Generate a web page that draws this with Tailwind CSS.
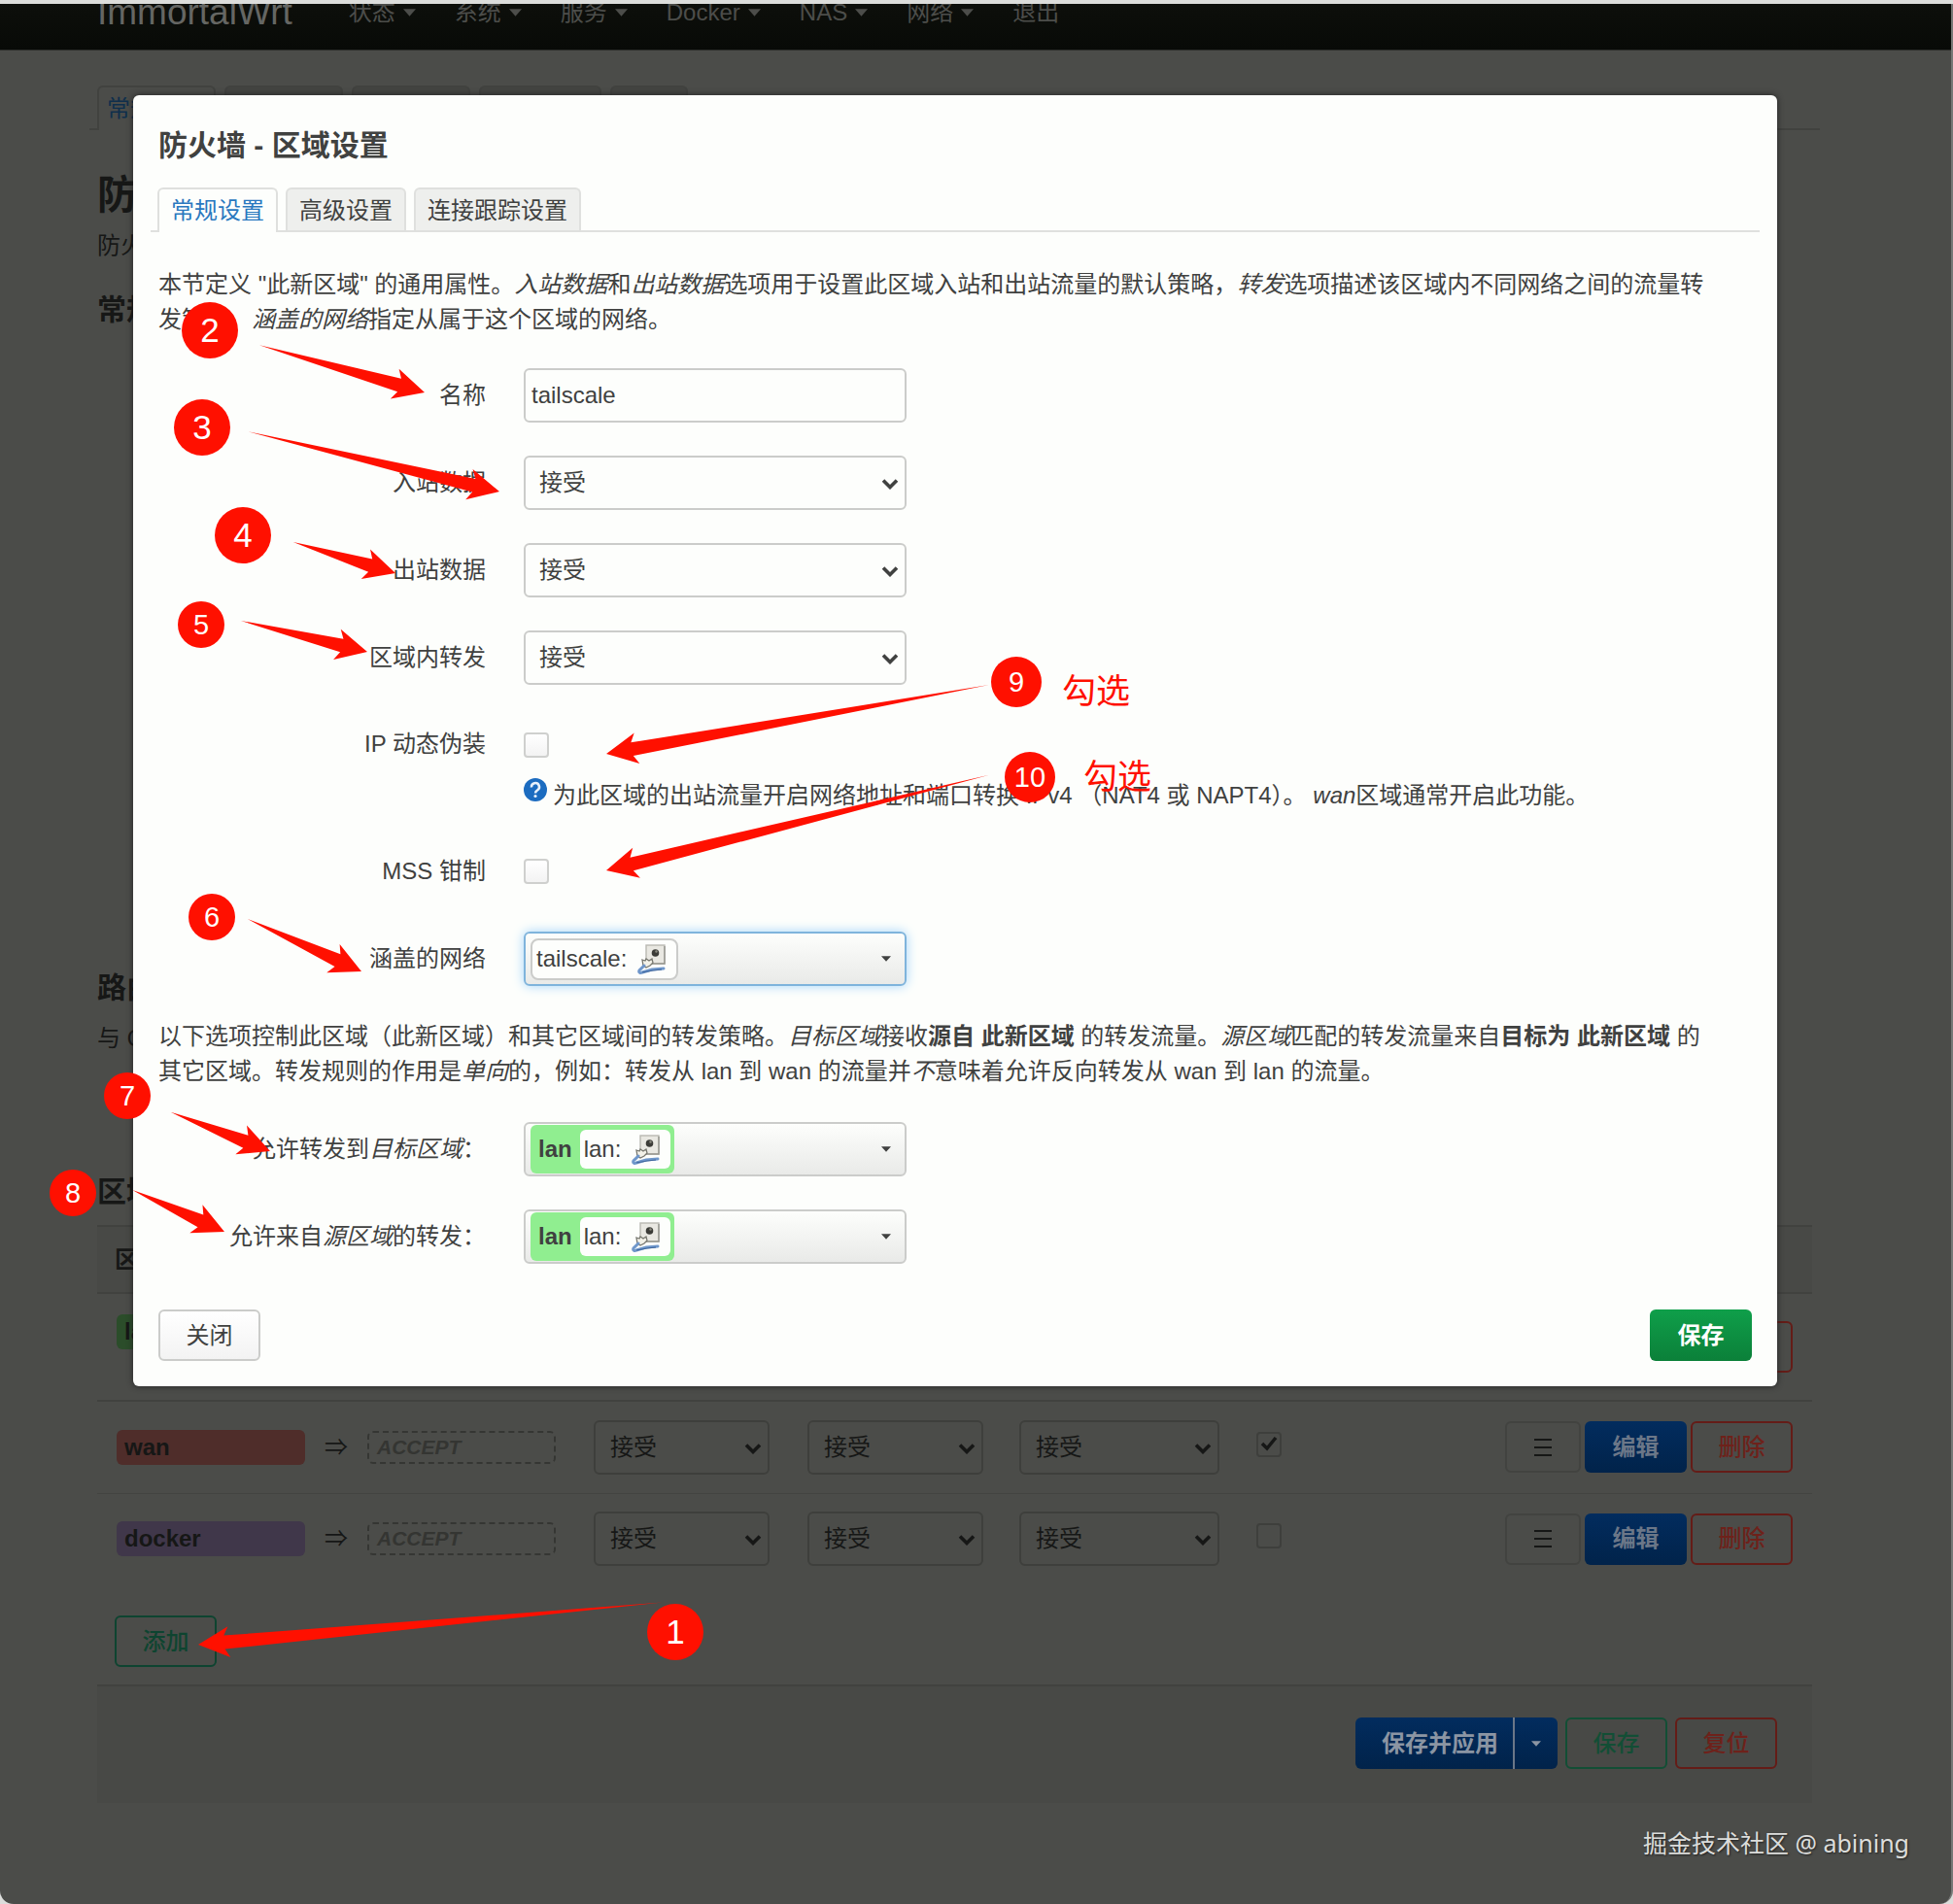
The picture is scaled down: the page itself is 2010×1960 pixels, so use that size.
<!DOCTYPE html>
<html lang="zh-CN">
  <head>
    <meta charset="UTF-8" />
    <meta name="viewport" content="width=device-width, initial-scale=1.0" />
    <title>ImmortalWrt - 防火墙</title>
    <script src="https://cdn.jsdelivr.net/npm/@tailwindcss/browser@4"></script>
  </head>
  <body class="bg-[#dcdddb] font-['Liberation_Sans','Noto_Sans_CJK_SC',sans-serif] text-[24px] leading-9 text-[#404140]">
    <!-- shared symbols -->
    <svg class="hidden">
      <symbol id="chevron" viewBox="0 0 18 12">
        <path d="M2 2.5 9 9.5 16 2.5" fill="none" stroke="currentColor" stroke-width="3.6" />
      </symbol>
      <symbol id="caret" viewBox="0 0 14 8"><path d="M0 0h14L7 8z" fill="currentColor" /></symbol>
      <symbol id="iface" viewBox="0 0 30 32">
        <rect x="9" y="2" width="19" height="19" fill="#e9e8e2" stroke="#b9b9b3" stroke-width="1.4" />
        <path d="M28 3v18H11" fill="none" stroke="#96968f" stroke-width="1.4" />
        <circle cx="18.5" cy="10" r="3.8" fill="#3c3c38" />
        <circle cx="19.5" cy="8.5" r="1.2" fill="#8b8b80" />
        <path d="M5 17l3 1 1-2 3 2 3-2 1 4-3 3-4 2-3-2z" fill="#f3f1e8" stroke="#77776f" stroke-width="1.3" />
        <path d="M7 23 2 28c-1 2 1 3 3 2l10-3 12-1" fill="none" stroke="#6f97cb" stroke-width="3" stroke-linecap="round" />
        <path d="M5 30 16 28l9-1" fill="none" stroke="#3f659b" stroke-width="1.2" />
      </symbol>
    </svg>

    <div class="relative min-h-screen overflow-hidden pt-1">
      <div class="min-h-[1956px] overflow-hidden rounded-b-[14px] border-r-2 border-[#777876] bg-[#4b4c49] text-[#161716]">
        <header class="h-12 overflow-hidden border-b border-[#2c2d2a] bg-linear-to-b from-[#0d0f0b] to-[#080a07] pl-[100px] text-[#4c4d4a]">
          <nav class="-mt-[9px] flex items-center gap-10">
            <a href="#" class="mr-[18px] text-[37px] text-[#656663]">ImmortalWrt</a>
            <a href="#" class="flex items-center gap-2">状态 <svg class="h-2 w-[13px]"><use href="#caret" /></svg></a>
            <a href="#" class="flex items-center gap-2">系统 <svg class="h-2 w-[13px]"><use href="#caret" /></svg></a>
            <a href="#" class="flex items-center gap-2">服务 <svg class="h-2 w-[13px]"><use href="#caret" /></svg></a>
            <a href="#" class="flex items-center gap-2">Docker <svg class="h-2 w-[13px]"><use href="#caret" /></svg></a>
            <a href="#" class="flex items-center gap-2">NAS <svg class="h-2 w-[13px]"><use href="#caret" /></svg></a>
            <a href="#" class="flex items-center gap-2">网络 <svg class="h-2 w-[13px]"><use href="#caret" /></svg></a>
            <a href="#">退出</a>
          </nav>
        </header>

        <main class="mr-[143px] ml-[100px]">
          <div class="-mr-2 -ml-2 mt-9 flex h-[46px] items-stretch gap-[9px] border-b-2 border-[#41423f] pl-2 whitespace-nowrap">
            <a href="#" class="-mb-[2px] w-[122px] rounded-t-md border-2 border-b-0 border-[#41423f] bg-[#4b4c49] px-2 pt-1 text-[#0f2f4c]">常规设置</a>
            <a href="#" class="w-[122px] rounded-t-md border-2 border-b-0 border-[#41423f] bg-[#444542] px-2 pt-1">端口转发</a>
            <a href="#" class="w-[122px] rounded-t-md border-2 border-b-0 border-[#41423f] bg-[#444542] px-2 pt-1">通信规则</a>
            <a href="#" class="w-[126px] rounded-t-md border-2 border-b-0 border-[#41423f] bg-[#444542] px-2 pt-1">NAT 规则</a>
            <a href="#" class="w-20 rounded-t-md border-2 border-b-0 border-[#41423f] bg-[#444542] px-2 pt-1">集</a>
          </div>
          <h2 class="mt-10 text-[41px] leading-[54px] font-bold">防火墙 - 区域设置</h2>
          <p class="mt-[7px]">防火墙通过在网络接口上创建区域来控制网络流量。</p>
          <h3 class="mt-[30px] text-[30px] leading-9 font-bold">常规设置</h3>
          <h3 class="mt-[662px] text-[30px] leading-9 font-bold">路由/NAT 卸载</h3>
          <p class="mt-4">与 QoS/SQM 不完全兼容。</p>
          <h3 class="mt-[122px] text-[30px] leading-9 font-bold">区域</h3>

          <table class="mt-4 w-full table-fixed border-collapse text-left">
            <colgroup>
              <col class="w-[495px]" />
              <col class="w-[220px]" />
              <col class="w-[218px]" />
              <col class="w-[244px]" />
              <col class="w-[220px]" />
              <col />
            </colgroup>
            <thead>
              <tr class="h-[69px] border-y-2 border-[#41423f] bg-[#484946]">
                <th class="pl-[18px]">区域 ⇒ 转发</th>
                <th class="pl-4">入站数据</th>
                <th class="pl-4">出站数据</th>
                <th class="pl-4">区域内转发</th>
                <th class="pl-4">IP 动态伪装</th>
                <th></th>
              </tr>
            </thead>
            <tbody>
              <tr class="h-[111px] border-b-2 border-[#41423f]">
                <td class="pl-5"><div class="mb-8 w-[194px] rounded-md bg-[#2b4d2a] px-2 font-bold">lan</div></td>
                <td></td>
                <td></td>
                <td></td>
                <td></td>
                <td class="pr-5 text-right"><button class="h-[53px] w-[105px] rounded-md border-2 border-[#641c17] text-[#641c17]">删除</button></td>
              </tr>
              <tr class="h-[95px] border-b border-[#434441]">
                <td class="pl-5">
                  <div class="flex items-center">
                    <div class="h-9 w-[194px] rounded-md bg-[#4f2d2a] px-2 font-bold">wan</div>
                    <span class="w-16 text-center">⇒</span>
                    <div class="h-[34px] w-[194px] rounded-md border-2 border-dashed border-[#353633] px-2 text-[21px] leading-[30px] font-bold text-[#343532] italic">ACCEPT</div>
                  </div>
                </td>
                <td class="pl-4">
                  <div class="relative w-[181px]">
                    <select aria-label="wan 入站数据" class="h-14 w-full appearance-none rounded-md border-2 border-[#3e3f3c] px-[15px]"><option>接受</option></select>
                    <svg class="pointer-events-none absolute top-[23px] right-2 h-3 w-[18px]"><use href="#chevron" /></svg>
                  </div>
                </td>
                <td class="pl-4">
                  <div class="relative w-[181px]">
                    <select aria-label="wan 出站数据" class="h-14 w-full appearance-none rounded-md border-2 border-[#3e3f3c] px-[15px]"><option>接受</option></select>
                    <svg class="pointer-events-none absolute top-[23px] right-2 h-3 w-[18px]"><use href="#chevron" /></svg>
                  </div>
                </td>
                <td class="pl-4">
                  <div class="relative w-[206px]">
                    <select aria-label="wan 区域内转发" class="h-14 w-full appearance-none rounded-md border-2 border-[#3e3f3c] px-[15px]"><option>接受</option></select>
                    <svg class="pointer-events-none absolute top-[23px] right-2 h-3 w-[18px]"><use href="#chevron" /></svg>
                  </div>
                </td>
                <td class="pl-4">
                  <div class="relative h-8 w-[26px]">
                    <input type="checkbox" checked aria-label="wan IP 动态伪装" class="block size-[26px] appearance-none rounded-sm border-2 border-[#3e3f3c]" />
                    <svg class="pointer-events-none absolute top-1 left-1 size-[18px]" viewBox="0 0 18 18" fill="none" stroke="currentColor" stroke-width="3.5"><path d="M2 8l5 5L16 2" /></svg>
                  </div>
                </td>
                <td class="pr-5">
                  <div class="flex justify-end gap-1">
                    <button aria-label="拖动" class="flex h-[53px] w-[78px] items-center justify-center rounded-md border-2 border-[#424340]">
                      <svg class="h-5 w-[18px]" viewBox="0 0 18 20" stroke="currentColor" stroke-width="2"><path d="M0 2h18M0 10h18M0 18h18" /></svg>
                    </button>
                    <button class="h-[53px] w-[105px] rounded-md bg-linear-to-b from-[#022c5e] to-[#01234a] font-bold text-[#6b7788]">编辑</button>
                    <button class="h-[53px] w-[105px] rounded-md border-2 border-[#641c17] font-medium text-[#6e211a]">删除</button>
                  </div>
                </td>
              </tr>
              <tr class="h-[94px]">
                <td class="pl-5">
                  <div class="flex items-center">
                    <div class="h-9 w-[194px] rounded-md bg-[#40374a] px-2 font-bold">docker</div>
                    <span class="w-16 text-center">⇒</span>
                    <div class="h-[34px] w-[194px] rounded-md border-2 border-dashed border-[#353633] px-2 text-[21px] leading-[30px] font-bold text-[#343532] italic">ACCEPT</div>
                  </div>
                </td>
                <td class="pl-4">
                  <div class="relative w-[181px]">
                    <select aria-label="docker 入站数据" class="h-14 w-full appearance-none rounded-md border-2 border-[#3e3f3c] px-[15px]"><option>接受</option></select>
                    <svg class="pointer-events-none absolute top-[23px] right-2 h-3 w-[18px]"><use href="#chevron" /></svg>
                  </div>
                </td>
                <td class="pl-4">
                  <div class="relative w-[181px]">
                    <select aria-label="docker 出站数据" class="h-14 w-full appearance-none rounded-md border-2 border-[#3e3f3c] px-[15px]"><option>接受</option></select>
                    <svg class="pointer-events-none absolute top-[23px] right-2 h-3 w-[18px]"><use href="#chevron" /></svg>
                  </div>
                </td>
                <td class="pl-4">
                  <div class="relative w-[206px]">
                    <select aria-label="docker 区域内转发" class="h-14 w-full appearance-none rounded-md border-2 border-[#3e3f3c] px-[15px]"><option>接受</option></select>
                    <svg class="pointer-events-none absolute top-[23px] right-2 h-3 w-[18px]"><use href="#chevron" /></svg>
                  </div>
                </td>
                <td class="pl-4">
                  <div class="h-8 w-[26px]">
                    <input type="checkbox" aria-label="docker IP 动态伪装" class="block size-[26px] appearance-none rounded-sm border-2 border-[#3e3f3c]" />
                  </div>
                </td>
                <td class="pr-5">
                  <div class="flex justify-end gap-1">
                    <button aria-label="拖动" class="flex h-[53px] w-[78px] items-center justify-center rounded-md border-2 border-[#424340]">
                      <svg class="h-5 w-[18px]" viewBox="0 0 18 20" stroke="currentColor" stroke-width="2"><path d="M0 2h18M0 10h18M0 18h18" /></svg>
                    </button>
                    <button class="h-[53px] w-[105px] rounded-md bg-linear-to-b from-[#022c5e] to-[#01234a] font-bold text-[#6b7788]">编辑</button>
                    <button class="h-[53px] w-[105px] rounded-md border-2 border-[#641c17] font-medium text-[#6e211a]">删除</button>
                  </div>
                </td>
              </tr>
            </tbody>
          </table>

          <button class="mt-8 ml-[18px] block h-[53px] w-[105px] rounded-md border-2 border-[#0e4430] font-medium text-[#0e4430]">添加</button>

          <div class="mt-[18px] flex h-[122px] items-start justify-end gap-2 border-t-2 border-[#41423f] bg-[#484946] pt-8 pr-9">
            <div class="flex h-[53px] overflow-hidden rounded-md bg-linear-to-b from-[#022c5e] to-[#01234a] text-[#8b95a3]">
              <button class="w-[162px] pl-3 font-bold">保存并应用</button>
              <button aria-label="更多" class="flex w-[46px] items-center justify-center border-l-2 border-[#6b7788]">
                <svg class="h-[6px] w-[10px]" viewBox="0 0 14 8"><path d="M0 0h14L7 8z" fill="currentColor" /></svg>
              </button>
            </div>
            <button class="h-[53px] w-[105px] rounded-md border-2 border-[#124e35] font-medium text-[#124e35]">保存</button>
            <button class="h-[53px] w-[105px] rounded-md border-2 border-[#641c17] font-medium text-[#6e211a]">复位</button>
          </div>
        </main>
      </div>

      <!-- modal -->
      <div role="dialog" aria-labelledby="modal-title" class="absolute top-[98px] right-[181px] left-[137px] rounded-md bg-[#fdfefc] px-[26px] pt-[34px] pb-[26px] shadow-[0_0_6px_#222]">
        <h4 id="modal-title" class="text-[30px] leading-9 font-bold">防火墙 - 区域设置</h4>

        <div class="-mx-2 mt-[25px] flex h-[46px] gap-2 border-b-2 border-[#dfe0de] pl-[7px]">
          <a href="#" class="-mb-[2px] rounded-t-md border-2 border-b-0 border-[#dfe0de] bg-[#fdfefc] px-3 pt-1 text-[#2a78bf]">常规设置</a>
          <a href="#" class="rounded-t-md border-2 border-b-0 border-[#dfe0de] bg-[#eeefed] px-3 pt-1">高级设置</a>
          <a href="#" class="rounded-t-md border-2 border-b-0 border-[#dfe0de] bg-[#eeefed] px-3 pt-1">连接跟踪设置</a>
        </div>

        <p class="mt-9 pr-8">
          本节定义 "此新区域" 的通用属性。<em>入站数据</em>和<em>出站数据</em>选项用于设置此区域入站和出站流量的默认策略，<em>转发</em>选项描述该区域内不同网络之间的流量转发策略。<em>涵盖的网络</em>指定从属于这个区域的网络。
        </p>

        <form class="mt-8 flex flex-col gap-[34px]">
          <div class="flex items-center gap-[39px]">
            <label for="name" class="w-[337px] text-right">名称</label>
            <input id="name" type="text" value="tailscale" class="h-14 w-[394px] rounded-md border-2 border-[#cbccca] px-[6px]" />
          </div>
          <div class="flex items-center gap-[39px]">
            <label for="input" class="w-[337px] text-right">入站数据</label>
            <div class="relative w-[394px]">
              <select id="input" class="h-14 w-full appearance-none rounded-md border-2 border-[#cbccca] px-[14px]"><option>接受</option></select>
              <svg class="pointer-events-none absolute top-[23px] right-2 h-3 w-[18px]"><use href="#chevron" /></svg>
            </div>
          </div>
          <div class="flex items-center gap-[39px]">
            <label for="output" class="w-[337px] text-right">出站数据</label>
            <div class="relative w-[394px]">
              <select id="output" class="h-14 w-full appearance-none rounded-md border-2 border-[#cbccca] px-[14px]"><option>接受</option></select>
              <svg class="pointer-events-none absolute top-[23px] right-2 h-3 w-[18px]"><use href="#chevron" /></svg>
            </div>
          </div>
          <div class="flex items-center gap-[39px]">
            <label for="forward" class="w-[337px] text-right">区域内转发</label>
            <div class="relative w-[394px]">
              <select id="forward" class="h-14 w-full appearance-none rounded-md border-2 border-[#cbccca] px-[14px]"><option>接受</option></select>
              <svg class="pointer-events-none absolute top-[23px] right-2 h-3 w-[18px]"><use href="#chevron" /></svg>
            </div>
          </div>
          <div class="flex items-start gap-[39px]">
            <label for="masq" class="w-[337px] pt-[9px] text-right">IP 动态伪装</label>
            <div>
              <div class="flex h-14 items-center"><input id="masq" type="checkbox" class="size-[26px] appearance-none rounded-sm border-2 border-[#cfd0ce] bg-linear-to-b from-white to-[#f3f3f3]" /></div>
              <div class="flex items-start gap-[6px] pt-[6px]">
                <svg class="size-6" viewBox="0 0 24 24">
                  <circle cx="12" cy="12" r="12" fill="#1c6cc0" />
                  <path d="M8 9.5a4 4 0 1 1 6 3c-1.500 1-2 1.500-2 3" fill="none" stroke="#e8f1fb" stroke-width="2.5" />
                  <circle cx="12" cy="18.5" r="1.6" fill="#e8f1fb" />
                </svg>
                <span class="pt-[2px] leading-8">为此区域的出站流量开启网络地址和端口转换 IPv4 （NAT4 或 NAPT4）。 <em>wan</em>区域通常开启此功能。</span>
              </div>
            </div>
          </div>
          <div class="flex items-center gap-[39px]">
            <label for="mss" class="w-[337px] text-right">MSS 钳制</label>
            <div class="flex h-14 items-center"><input id="mss" type="checkbox" class="size-[26px] appearance-none rounded-sm border-2 border-[#cfd0ce] bg-linear-to-b from-white to-[#f3f3f3]" /></div>
          </div>
          <div class="flex items-center gap-[39px]">
            <label for="network" class="w-[337px] text-right">涵盖的网络</label>
            <button id="network" type="button" aria-haspopup="listbox" class="flex h-14 w-[394px] items-center justify-between rounded-md border-2 border-[#7fb4dc] bg-linear-to-b from-[#fdfefc] to-[#e9eae8] pr-[14px] pl-[5px] shadow-[0_0_12px_#a5d6fb]">
              <span class="flex h-[43px] items-center gap-[11px] rounded-lg border-2 border-[#cbccca] bg-[#fdfefc] pr-[10px] pl-1">tailscale: <svg class="h-8 w-[30px]"><use href="#iface" /></svg></span>
              <svg class="h-[6px] w-[10px]" viewBox="0 0 14 8"><path d="M0 0h14L7 8z" fill="currentColor" /></svg>
            </button>
          </div>

          <p class="pr-10">
            以下选项控制此区域（此新区域）和其它区域间的转发策略。<em>目标区域</em>接收<b>源自 此新区域</b> 的转发流量。<em>源区域</em>匹配的转发流量来自<b>目标为 此新区域</b> 的其它区域。转发规则的作用是<em>单向</em>的，例如：转发从 lan 到 wan 的流量并<em>不</em>意味着允许反向转发从 wan 到 lan 的流量。
          </p>

          <div class="flex items-center gap-[39px]">
            <label for="dest" class="w-[337px] text-right">允许转发到<em>目标区域</em>：</label>
            <button id="dest" type="button" aria-haspopup="listbox" class="flex h-14 w-[394px] items-center justify-between rounded-md border-2 border-[#cbccca] bg-linear-to-b from-[#fdfefc] to-[#e9eae8] pr-[14px] pl-[5px]">
              <span class="flex h-[50px] items-center gap-2 rounded-md bg-[#90ee90] pr-1 pl-2"><b>lan</b><span class="flex h-10 items-center gap-[11px] rounded-md bg-[#fdfefc] pr-[10px] pl-1">lan: <svg class="h-8 w-[30px]"><use href="#iface" /></svg></span></span>
              <svg class="h-[6px] w-[10px]" viewBox="0 0 14 8"><path d="M0 0h14L7 8z" fill="currentColor" /></svg>
            </button>
          </div>
          <div class="flex items-center gap-[39px]">
            <label for="src" class="w-[337px] text-right">允许来自<em>源区域</em>的转发：</label>
            <button id="src" type="button" aria-haspopup="listbox" class="flex h-14 w-[394px] items-center justify-between rounded-md border-2 border-[#cbccca] bg-linear-to-b from-[#fdfefc] to-[#e9eae8] pr-[14px] pl-[5px]">
              <span class="flex h-[50px] items-center gap-2 rounded-md bg-[#90ee90] pr-1 pl-2"><b>lan</b><span class="flex h-10 items-center gap-[11px] rounded-md bg-[#fdfefc] pr-[10px] pl-1">lan: <svg class="h-8 w-[30px]"><use href="#iface" /></svg></span></span>
              <svg class="h-[6px] w-[10px]" viewBox="0 0 14 8"><path d="M0 0h14L7 8z" fill="currentColor" /></svg>
            </button>
          </div>
        </form>

        <div class="mt-[47px] flex justify-between">
          <button class="h-[53px] w-[105px] rounded-md border-2 border-[#cbccca] bg-linear-to-b from-white to-[#f3f3f3]">关闭</button>
          <button class="h-[53px] w-[105px] rounded-md bg-linear-to-b from-[#0f9f4a] to-[#0b8039] font-bold text-white">保存</button>
        </div>
      </div>

      <!-- step markers -->
      <svg class="pointer-events-none absolute top-0 left-0 h-[1960px] w-[1200px]" fill="#ff1000">
        <path transform="translate(204 1693) rotate(-5.2)" d="M0 0 32-16 27-7 480 0 27 7 32 16z" />
        <path transform="translate(437 404) rotate(196)" d="M0 0 32-16 27-7 177 0 27 7 32 16z" />
        <path transform="translate(514 506) rotate(193.4)" d="M0 0 32-16 27-7 266 0 27 7 32 16z" />
        <path transform="translate(407 590) rotate(196.9)" d="M0 0 32-16 27-7 110 0 27 7 32 16z" />
        <path transform="translate(378 671) rotate(193.8)" d="M0 0 32-16 27-7 134 0 27 7 32 16z" />
        <path transform="translate(372 1000) rotate(204.7)" d="M0 0 32-16 27-7 129 0 27 7 32 16z" />
        <path transform="translate(278 1185) rotate(201.4)" d="M0 0 32-16 27-7 110 0 27 7 32 16z" />
        <path transform="translate(231 1268) rotate(204.4)" d="M0 0 32-16 27-7 104 0 27 7 32 16z" />
        <path transform="translate(624 776) rotate(-10.2)" d="M0 0 32-16 27-7 401 0 27 7 32 16z" />
        <path transform="translate(624 896) rotate(-14)" d="M0 0 32-16 27-7 408 0 27 7 32 16z" />
      </svg>
      <div class="text-white">
        <span class="absolute top-[1651px] left-[666px] flex size-[58px] items-center justify-center rounded-full bg-[#ff1000] text-[35px]">1</span>
        <span class="absolute top-[311px] left-[187px] flex size-[58px] items-center justify-center rounded-full bg-[#ff1000] text-[35px]">2</span>
        <span class="absolute top-[411px] left-[179px] flex size-[58px] items-center justify-center rounded-full bg-[#ff1000] text-[35px]">3</span>
        <span class="absolute top-[522px] left-[221px] flex size-[58px] items-center justify-center rounded-full bg-[#ff1000] text-[35px]">4</span>
        <span class="absolute top-[619px] left-[183px] flex size-12 items-center justify-center rounded-full bg-[#ff1000] text-[29px]">5</span>
        <span class="absolute top-[920px] left-[194px] flex size-12 items-center justify-center rounded-full bg-[#ff1000] text-[29px]">6</span>
        <span class="absolute top-[1104px] left-[107px] flex size-12 items-center justify-center rounded-full bg-[#ff1000] text-[29px]">7</span>
        <span class="absolute top-[1204px] left-[51px] flex size-12 items-center justify-center rounded-full bg-[#ff1000] text-[29px]">8</span>
        <span class="absolute top-[676px] left-[1020px] flex size-[52px] items-center justify-center rounded-full bg-[#ff1000] text-[29px]">9</span>
        <span class="absolute top-[774px] left-[1034px] flex size-[52px] items-center justify-center rounded-full bg-[#ff1000] text-[29px]">10</span>
      </div>
      <span class="absolute top-[694px] left-[1093px] text-[35px] text-[#ff1000]">勾选</span>
      <span class="absolute top-[782px] left-[1115px] text-[35px] text-[#ff1000]">勾选</span>

      <p class="absolute right-[45px] bottom-[45px] font-['Noto_Sans','Noto_Sans_CJK_SC',sans-serif] text-[25px] text-[#dcdddb] [text-shadow:1px_1px_2px_#222]">掘金技术社区 @ abining</p>
    </div>
  </body>
</html>
